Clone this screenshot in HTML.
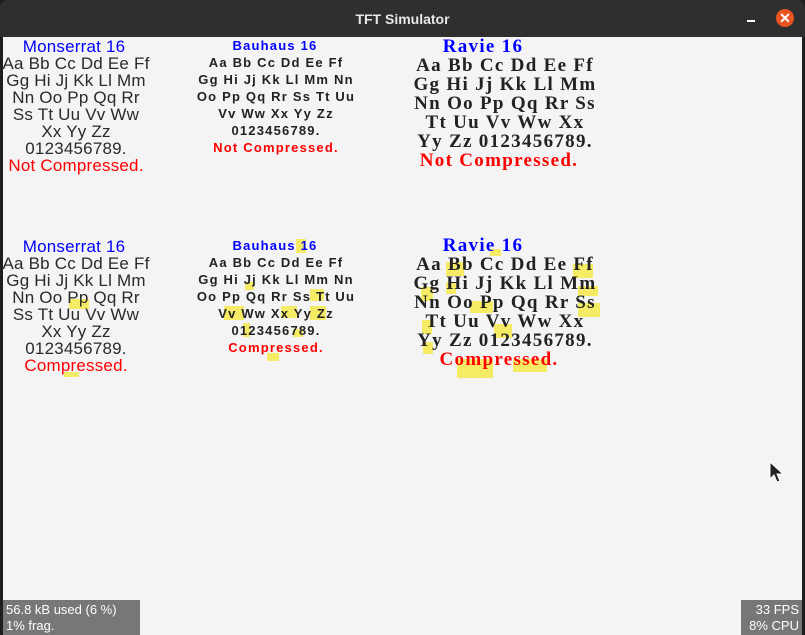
<!DOCTYPE html>
<html><head><meta charset="utf-8"><style>
*{margin:0;padding:0;box-sizing:border-box}
body{width:805px;height:635px;overflow:hidden;background:#1e1e1e;position:relative;font-family:"Liberation Sans",sans-serif}
#tb{position:absolute;left:0;top:0;width:805px;height:37px;background:#2f2f2f;border-radius:8px 8px 0 0}
#tb .t{position:absolute;left:0;width:805px;top:11px;text-align:center;color:#e8e8e8;font-weight:bold;font-size:14px}
#min{position:absolute;left:747px;top:20px;width:8px;height:2px;background:#fff}
#cl{position:absolute;left:776px;top:9px;width:18px;height:18px;border-radius:50%;background:#e95420;color:#fff;font-size:14px;line-height:18px;text-align:center;font-weight:bold}
#c{position:absolute;left:3px;top:37px;width:799px;height:598px;background:#f4f4f4}
.l{position:absolute;white-space:nowrap;text-align:center;transform:translateX(-50%)}
.m{font-size:17px;color:#2a2a2a;line-height:17px;letter-spacing:0.2px}
.b{font-size:13px;font-weight:bold;color:#222;line-height:17px;letter-spacing:1.2px}
.r{font-family:"Liberation Serif",serif;font-size:19px;font-weight:bold;color:#222;line-height:19px;letter-spacing:1.3px}
.blue{color:#0000ff}.red{color:#ff0000}
.y{position:absolute;background:#f5e94a;opacity:.85}
.sb{position:absolute;background:#777;color:#fff;font-size:13px;line-height:16px;padding:2px 3px}
</style></head><body>
<div id="tb"><div class="t">TFT Simulator</div><div id="min"></div><div id="cl">✕</div></div>
<div id="c"></div>

<div class="y" style="left:69px;top:299px;width:20px;height:10px"></div>
<div class="y" style="left:64px;top:372px;width:15px;height:5px"></div>
<div class="y" style="left:296px;top:239px;width:10px;height:14px"></div>
<div class="y" style="left:245px;top:282px;width:9px;height:8px"></div>
<div class="y" style="left:310px;top:289px;width:14px;height:12px"></div>
<div class="y" style="left:224px;top:306px;width:20px;height:14px"></div>
<div class="y" style="left:281px;top:306px;width:16px;height:12px"></div>
<div class="y" style="left:310px;top:306px;width:16px;height:14px"></div>
<div class="y" style="left:243px;top:323px;width:7px;height:14px"></div>
<div class="y" style="left:293px;top:329px;width:10px;height:8px"></div>
<div class="y" style="left:267px;top:353px;width:12px;height:8px"></div>
<div class="y" style="left:490px;top:249px;width:11px;height:7px"></div>
<div class="y" style="left:446px;top:262px;width:18px;height:14px"></div>
<div class="y" style="left:573px;top:264px;width:20px;height:14px"></div>
<div class="y" style="left:421px;top:287px;width:12px;height:14px"></div>
<div class="y" style="left:446px;top:282px;width:10px;height:12px"></div>
<div class="y" style="left:578px;top:286px;width:20px;height:10px"></div>
<div class="y" style="left:470px;top:301px;width:23px;height:12px"></div>
<div class="y" style="left:578px;top:303px;width:22px;height:14px"></div>
<div class="y" style="left:422px;top:320px;width:10px;height:14px"></div>
<div class="y" style="left:494px;top:324px;width:18px;height:14px"></div>
<div class="y" style="left:423px;top:342px;width:10px;height:12px"></div>
<div class="y" style="left:457px;top:359px;width:36px;height:19px"></div>
<div class="y" style="left:513px;top:359px;width:34px;height:13px"></div>

<div class="l m blue" style="left:74px;top:38px">Monserrat 16</div>
<div class="l m" style="left:76px;top:55px">Aa Bb Cc Dd Ee Ff</div>
<div class="l m" style="left:76px;top:72px">Gg Hi Jj Kk Ll Mm</div>
<div class="l m" style="left:76px;top:89px">Nn Oo Pp Qq Rr</div>
<div class="l m" style="left:76px;top:106px">Ss Tt Uu Vv Ww</div>
<div class="l m" style="left:76px;top:123px">Xx Yy Zz</div>
<div class="l m" style="left:76px;top:140px">0123456789.</div>
<div class="l m red" style="left:76px;top:157px">Not Compressed.</div>

<div class="l b blue" style="left:275px;top:37px">Bauhaus 16</div>
<div class="l b" style="left:276px;top:54px">Aa Bb Cc Dd Ee Ff</div>
<div class="l b" style="left:276px;top:71px">Gg Hi Jj Kk Ll Mm Nn</div>
<div class="l b" style="left:276px;top:88px">Oo Pp Qq Rr Ss Tt Uu</div>
<div class="l b" style="left:276px;top:105px">Vv Ww Xx Yy Zz</div>
<div class="l b" style="left:276px;top:122px">0123456789.</div>
<div class="l b red" style="left:276px;top:139px">Not Compressed.</div>

<div class="l r blue" style="left:483px;top:37px">Ravie 16</div>
<div class="l r" style="left:505px;top:56px">Aa Bb Cc Dd Ee Ff</div>
<div class="l r" style="left:505px;top:75px">Gg Hi Jj Kk Ll Mm</div>
<div class="l r" style="left:505px;top:94px">Nn Oo Pp Qq Rr Ss</div>
<div class="l r" style="left:505px;top:113px">Tt Uu Vv Ww Xx</div>
<div class="l r" style="left:505px;top:132px">Yy Zz 0123456789.</div>
<div class="l r red" style="left:499px;top:151px">Not Compressed.</div>

<div class="l m blue" style="left:74px;top:238px">Monserrat 16</div>
<div class="l m" style="left:76px;top:255px">Aa Bb Cc Dd Ee Ff</div>
<div class="l m" style="left:76px;top:272px">Gg Hi Jj Kk Ll Mm</div>
<div class="l m" style="left:76px;top:289px">Nn Oo Pp Qq Rr</div>
<div class="l m" style="left:76px;top:306px">Ss Tt Uu Vv Ww</div>
<div class="l m" style="left:76px;top:323px">Xx Yy Zz</div>
<div class="l m" style="left:76px;top:340px">0123456789.</div>
<div class="l m red" style="left:76px;top:357px">Compressed.</div>

<div class="l b blue" style="left:275px;top:237px">Bauhaus 16</div>
<div class="l b" style="left:276px;top:254px">Aa Bb Cc Dd Ee Ff</div>
<div class="l b" style="left:276px;top:271px">Gg Hi Jj Kk Ll Mm Nn</div>
<div class="l b" style="left:276px;top:288px">Oo Pp Qq Rr Ss Tt Uu</div>
<div class="l b" style="left:276px;top:305px">Vv Ww Xx Yy Zz</div>
<div class="l b" style="left:276px;top:322px">0123456789.</div>
<div class="l b red" style="left:276px;top:339px">Compressed.</div>

<div class="l r blue" style="left:483px;top:236px">Ravie 16</div>
<div class="l r" style="left:505px;top:255px">Aa Bb Cc Dd Ee Ff</div>
<div class="l r" style="left:505px;top:274px">Gg Hi Jj Kk Ll Mm</div>
<div class="l r" style="left:505px;top:293px">Nn Oo Pp Qq Rr Ss</div>
<div class="l r" style="left:505px;top:312px">Tt Uu Vv Ww Xx</div>
<div class="l r" style="left:505px;top:331px">Yy Zz 0123456789.</div>
<div class="l r red" style="left:499px;top:350px">Compressed.</div>

<svg style="position:absolute;left:769px;top:461px" width="16" height="24"><path d="M1 1 L1 18 L5 14 L8 21 L11 20 L8 13 L14 13 Z" fill="#222" stroke="#fff" stroke-width="1"/></svg>

<div class="sb" style="left:3px;top:600px;width:137px;height:35px">56.8 kB used (6 %)<br>1% frag.</div>
<div class="sb" style="left:741px;top:600px;width:61px;height:35px;text-align:right">33 FPS<br>8% CPU</div>
</body></html>
